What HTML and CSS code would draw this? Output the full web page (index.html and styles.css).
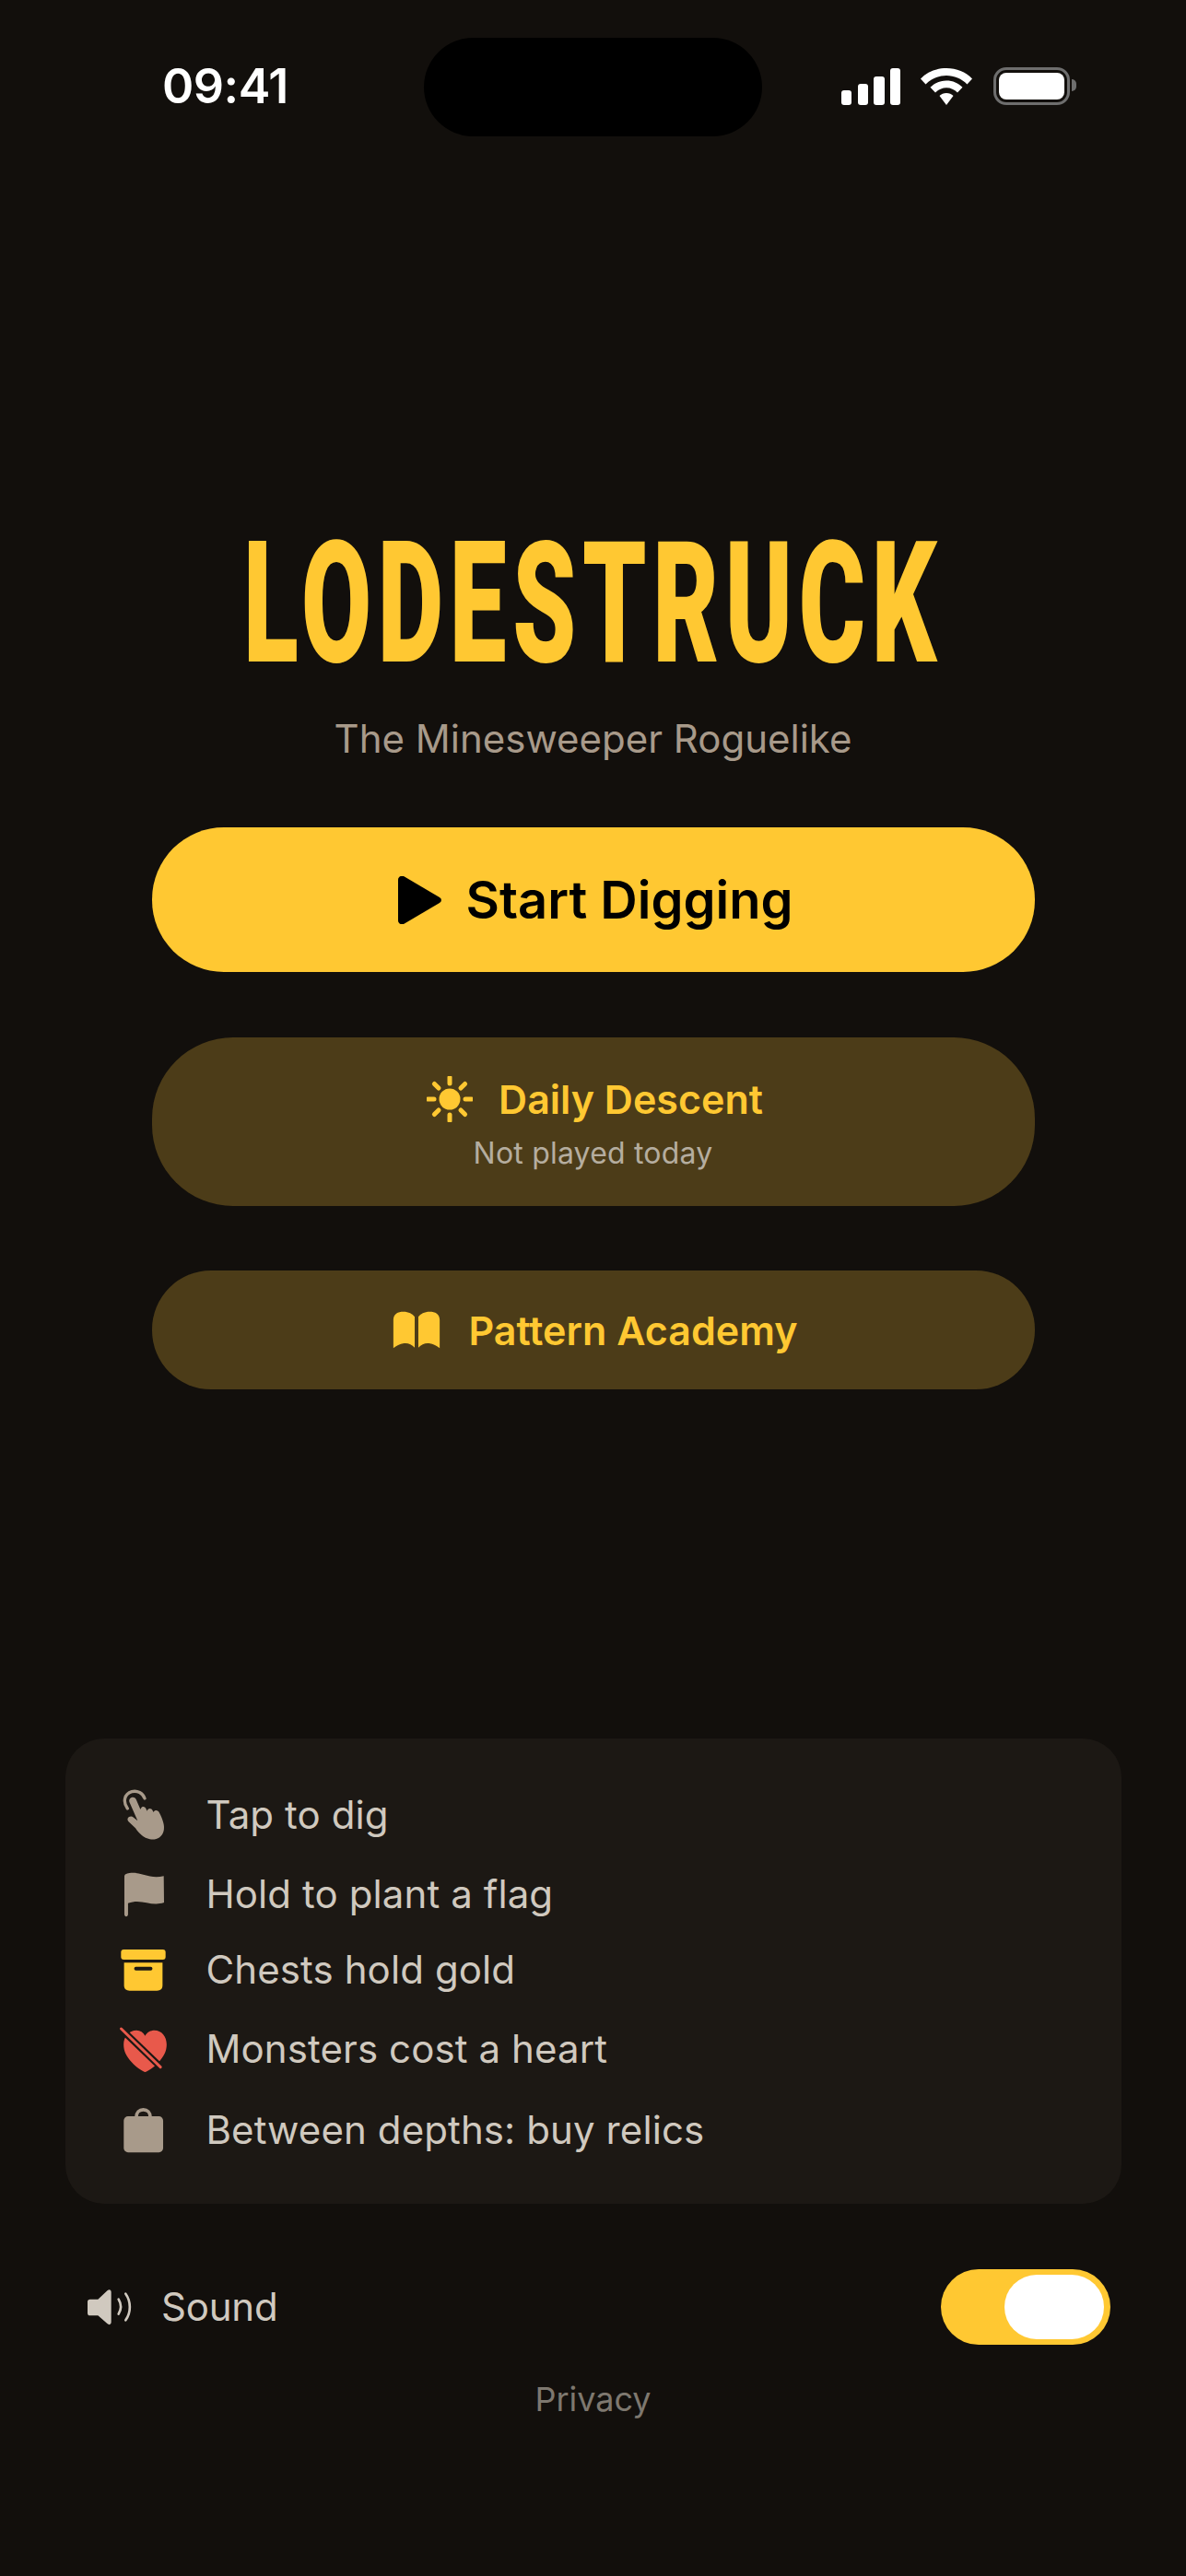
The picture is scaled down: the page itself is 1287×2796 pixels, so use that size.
FILE: index.html
```html
<!DOCTYPE html>
<html lang="en">
<head>
<meta charset="utf-8">
<title>Lodestruck</title>
<link rel="stylesheet" href="styles.css">
</head>
<body>
<main class="screen">
  <header class="status">
    <span class="time">09:41</span>
    <span class="island"></span>
    <svg class="sig" viewBox="0 0 64 40" aria-hidden="true"><rect x="0" y="24" width="11" height="16" rx="3"/><rect x="18" y="17" width="11" height="23" rx="3"/><rect x="35" y="9" width="12" height="31" rx="3"/><rect x="53" y="0" width="11" height="40" rx="3"/></svg>
    <svg class="wifi" viewBox="0 0 56 40" aria-hidden="true"><path d="M28 0C39 0 49 4 56 11.500L50.500 17.500C44.500 11.500 36.500 8 28 8C19.500 8 11.500 11.500 5.500 17.500L0 11.500C7 4 17 0 28 0Z"/><path d="M28 13.500C35 13.500 41 16.200 45.500 20.800L40 26.500C36.800 23.300 32.600 21.300 28 21.300C23.400 21.300 19.200 23.300 16 26.500L10.500 20.800C15 16.200 21 13.500 28 13.500Z"/><path d="M28 27C31 27 33.500 28 35.500 30L28 40L20.500 30C22.500 28 25 27 28 27Z"/></svg>
    <span class="battery"><span class="battery-fill"></span></span>
  </header>

  <h1 class="title"><span class="title-text">LODESTRUCK</span></h1>
  <p class="tagline">The Minesweeper Roguelike</p>

  <button class="btn btn-primary">
    <svg class="ic-play" viewBox="0 0 47 52" aria-hidden="true"><path d="M0 4C0 0.500 3.500-1 6-0.000L45 23C47.500 24.500 47.500 27.500 45 29L6 52C3.500 53 0 51.500 0 48Z"/></svg>
    <span>Start Digging</span>
  </button>

  <button class="btn btn-daily">
    <span class="btn-line">
      <svg class="ic-sun" viewBox="0 0 50 50" aria-hidden="true"><circle cx="25" cy="25" r="11.500"/><g class="rays"><path d="M25 1.500V8"/><path d="M25 42V48.500"/><path d="M1.500 25H8"/><path d="M42 25H48.500"/><path d="M8.400 8.400L13 13"/><path d="M37 37L41.600 41.600"/><path d="M8.400 41.600L13 37"/><path d="M37 13L41.600 8.400"/></g></svg>
      <span>Daily Descent</span>
    </span>
    <span class="btn-sub">Not played today</span>
  </button>

  <button class="btn btn-academy">
    <svg class="ic-book" viewBox="33 26 156 124" aria-hidden="true"><path d="M35 55C35 35 50 28 68 28C85 28 98 35 105 45V146C95 135 82 130 70 132C55 134 45 140 35 148Z"/><path d="M117 45C124 35 137 28 154 28C172 28 187 35 187 55V148C177 140 167 134 152 132C140 130 127 135 117 146Z"/></svg>
    <span>Pattern Academy</span>
  </button>

  <section class="tips">
    <div class="tip tip-tap">
      <svg class="tip-ic ic-hand" viewBox="30 25 150 168" aria-hidden="true"><path class="hand-ring" d="M52 88C36 66 42 40 66 33C84 28 102 38 108 55"/><path class="fill-tan" d="M58 66C55 52 74 46 80 58L94 90L96 88C98 80 110 80 113 90L116 96C118 86 130 85 134 95L137 100C140 92 152 92 156 102C168 125 174 145 170 160C165 182 145 192 125 188C105 184 90 170 78 152L55 130C47 120 60 108 72 117L85 128Z"/></svg>
      <span>Tap to dig</span>
    </div>
    <div class="tip tip-flag">
      <svg class="tip-ic ic-flag" viewBox="205 490 160 148" aria-hidden="true"><path class="fill-tan" d="M223 505C223 498 228 495 240 493C280 488 305 515 352 503L353 590C310 605 280 575 235 592V628C235 638 223 638 223 628Z"/></svg>
      <span>Hold to plant a flag</span>
    </div>
    <div class="tip tip-box">
      <svg class="tip-ic ic-box" viewBox="205 740 160 140" aria-hidden="true"><rect class="fill-gold" x="212" y="742" width="146" height="33" rx="9"/><path class="fill-gold" d="M222 785H348V860C348 871 341 877 330 877H240C229 877 222 871 222 860Z"/><rect class="slot" x="255" y="799" width="60" height="12" rx="6"/></svg>
      <span>Chests hold gold</span>
    </div>
    <div class="tip tip-heart">
      <svg class="tip-ic ic-heart" viewBox="25 32 158 153" aria-hidden="true"><path class="fill-red" d="M110 182C104 182 82 168 66 150C50 132 40 115 40 92C40 66 58 46 82 46C94 46 104 52 110 64C116 52 128 46 140 46C164 46 180 66 180 92C180 115 170 132 154 150C138 168 116 182 110 182Z"/><path class="slash-gap" d="M30 40L163 168"/><path class="slash" d="M32 41L160 166"/></svg>
      <span>Monsters cost a heart</span>
    </div>
    <div class="tip tip-bag">
      <svg class="tip-ic ic-bag" viewBox="205 355 160 150" aria-hidden="true"><rect class="fill-tan" x="221" y="385" width="129" height="118" rx="14"/><path class="bag-handle" d="M262 388C262 372 272 363 285 363C298 363 308 372 308 388"/></svg>
      <span>Between depths: buy relics</span>
    </div>
  </section>

  <div class="sound-row">
    <span class="sound">
      <svg class="ic-sound" viewBox="25 30 150 120" aria-hidden="true"><path class="fill-cream" d="M36 65H62L93 36C99 31 105 34 105 42V139C105 147 99 150 93 145L62 118H36C31 118 28 115 28 110V73C28 68 31 65 36 65Z"/><path class="wave" d="M129 65C138 80 138 98 129 113"/><path class="wave" d="M152 47C170 72 170 108 152 133"/></svg>
      <span>Sound</span>
    </span>
    <span class="toggle"><span class="knob"></span></span>
  </div>

  <a class="privacy">Privacy</a>
</main>
</body>
</html>
```

FILE: styles.css
```css
* { box-sizing: border-box; }
html, body { margin: 0; padding: 0; }
body {
  background: #120f0c;
  font-family: Inter, "Noto Sans", sans-serif;
  color: #d0c9bf;
}
.screen {
  width: 1287px;
  height: 2796px;
  display: flex;
  flex-direction: column;
  align-items: center;
  overflow: hidden;
}

/* status bar */
.status {
  width: 100%;
  height: 148px;
  padding: 41px 0 0 176px;
  display: flex;
  align-items: flex-start;
}
.time {
  width: 136px;
  margin-top: 27px;
  font-size: 52px;
  line-height: 52px;
  font-weight: 600;
  color: #fff;
  letter-spacing: -0.5px;
  white-space: nowrap;
}
.island {
  width: 367px;
  height: 107px;
  margin-left: 148px;
  border-radius: 54px;
  background: #000;
}
.sig { width: 64px; height: 40px; fill: #fff; margin: 33px 0 0 86px; }
.wifi { width: 56px; height: 40px; fill: #fff; margin: 33px 0 0 22px; }
.battery {
  position: relative;
  width: 83px;
  height: 41px;
  margin: 32px 0 0 23px;
  padding: 3px;
  border: 3.500px solid #6e6e6e;
  border-radius: 14px;
  display: block;
}
.battery::after {
  content: "";
  position: absolute;
  right: -10px;
  top: 10px;
  width: 5px;
  height: 13px;
  border-radius: 0 5px 5px 0;
  background: #6e6e6e;
}
.battery-fill {
  display: block;
  width: 100%;
  height: 100%;
  border-radius: 8px;
  background: #fff;
}

/* title */
.title {
  margin: 442px 0 0;
  height: 131px;
  line-height: 131px;
  font-family: Roboto, sans-serif;
  font-size: 184px;
  font-weight: 900;
  color: #ffc832;
  white-space: nowrap;
  letter-spacing: 11px;
}
.title-text {
  display: inline-block;
  transform: scaleX(0.6);
  transform-origin: center;
}
.tagline {
  margin: 56px 0 0;
  font-size: 42px;
  line-height: 50px;
  color: #a89a8a;
}

/* buttons */
.btn {
  width: 958px;
  border: 0;
  padding: 0;
  font-family: inherit;
  font-weight: 600;
  display: flex;
  align-items: center;
  justify-content: center;
}
.btn-primary {
  height: 157px;
  margin-top: 71px;
  padding-left: 5px;
  border-radius: 78px;
  background: #ffc832;
  color: #000;
  font-size: 56px;
  gap: 27px;
}
.ic-play { width: 47px; height: 52px; fill: #000; }
.btn-daily, .btn-academy {
  background: #4c3c18;
  color: #ffc832;
  font-size: 43px;
}
.btn-daily {
  height: 183px;
  margin-top: 71px;
  padding-top: 5px;
  border-radius: 88px;
  flex-direction: column;
  gap: 11px;
}
.btn-line { display: flex; align-items: center; gap: 28px; margin-left: 4px; }
.ic-sun { width: 50px; height: 50px; fill: #ffc832; }
.rays { fill: none; stroke: #ffc832; stroke-width: 5px; stroke-linecap: round; }
.btn-sub {
  font-size: 32px;
  line-height: 44px;
  font-weight: 400;
  letter-spacing: 0.2px;
  color: #b5ad9f;
}
.btn-academy {
  height: 129px;
  margin-top: 70px;
  padding-left: 5px;
  border-radius: 64px;
  gap: 30px;
}
.ic-book { width: 52px; height: 41px; fill: #ffc832; }

/* tips */
.tips {
  width: 1146px;
  height: 505px;
  margin-top: 379px;
  padding: 55px 0 0 58px;
  border-radius: 42px;
  background: #1c1814;
  display: flex;
  flex-direction: column;
  font-size: 42px;
  line-height: 56px;
  letter-spacing: 0.1px;
}
.tip {
  display: flex;
  align-items: center;
  color: #d0c9bf;
}
.tip-ic { flex: none; margin-right: 42px; }
.ic-hand { width: 50px; height: 56px; margin-left: 2px; margin-right: 43px; }
.ic-flag, .ic-box, .ic-bag { width: 53px; }
.ic-heart { width: 53px; height: 51px; }
.ic-flag { height: 49px; }
.ic-box { height: 47px; }
.ic-bag { height: 50px; }
.tip-flag { margin-top: 30px; }
.tip-box { margin-top: 26px; }
.tip-heart { margin-top: 30px; }
.tip-bag { margin-top: 32px; }
.fill-tan { fill: #a89a8a; }
.fill-gold { fill: #ffc832; }
.fill-red { fill: #e8594b; }
.fill-cream { fill: #d0c9bf; }
.slot { fill: #1c1814; }
.hand-ring { fill: none; stroke: #a89a8a; stroke-width: 10px; stroke-linecap: round; }
.bag-handle { fill: none; stroke: #a89a8a; stroke-width: 11px; }
.slash { stroke: #e8594b; stroke-width: 9px; stroke-linecap: round; }
.slash-gap { stroke: #1c1814; stroke-width: 22px; }

/* sound */
.sound-row {
  width: 1287px;
  margin-top: 71px;
  padding: 0 82px 0 94px;
  display: flex;
  align-items: center;
  justify-content: space-between;
}
.sound {
  display: flex;
  align-items: center;
  gap: 31px;
  font-size: 42px;
  line-height: 56px;
  letter-spacing: -0.2px;
}
.ic-sound { width: 50px; height: 40px; }
.wave { fill: none; stroke: #d0c9bf; stroke-width: 8px; stroke-linecap: round; }
.toggle {
  width: 184px;
  height: 82px;
  padding: 6px 7px;
  border-radius: 41px;
  background: #ffc832;
  display: flex;
  justify-content: flex-end;
}
.knob {
  width: 108px;
  height: 70px;
  border-radius: 35px;
  background: #fff;
}
.privacy {
  margin-top: 37px;
  font-size: 36px;
  line-height: 44px;
  color: #7e786f;
}
```
